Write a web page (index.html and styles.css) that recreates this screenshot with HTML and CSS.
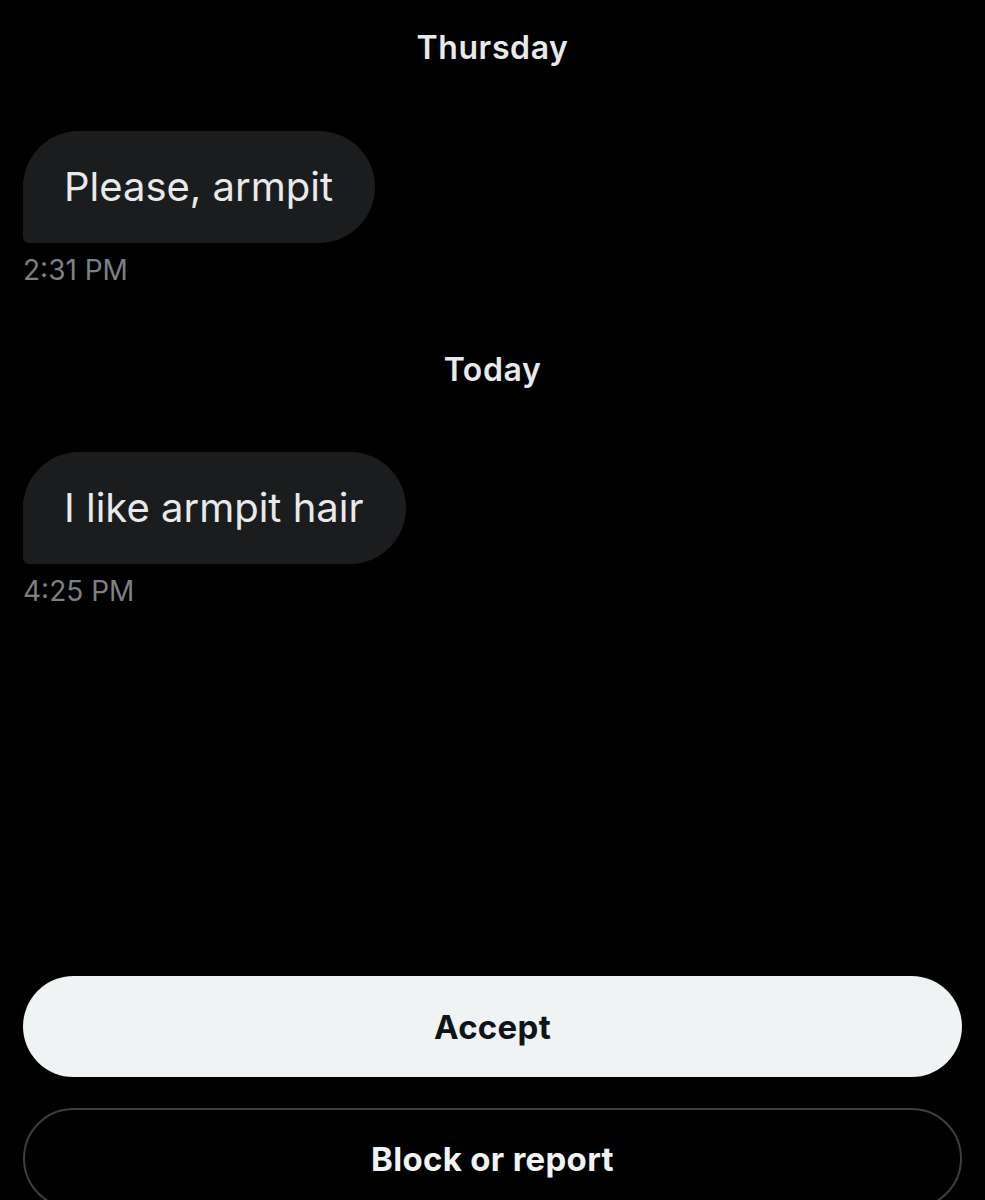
FILE: index.html
```html
<!DOCTYPE html>
<html lang="en">
<head>
  <meta charset="UTF-8">
  <meta name="viewport" content="width=device-width, initial-scale=1.0">
  <title>Message request</title>
  <link rel="stylesheet" href="styles.css">
</head>
<body>
  <main class="thread">
    <div class="day">Thursday</div>
    <div class="message">
      <div class="bubble">Please, armpit</div>
      <div class="time">2:31 PM</div>
    </div>

    <div class="day">Today</div>
    <div class="message">
      <div class="bubble">I like armpit hair</div>
      <div class="time">4:25 PM</div>
    </div>
  </main>

  <div class="actions">
    <button class="btn accept">Accept</button>
    <button class="btn block">Block or report</button>
  </div>
</body>
</html>
```

FILE: styles.css
```css
body {
  background-color: #000;
  color: #e7e9ea;
  font-family: Inter, "Noto Sans", Arial, sans-serif;
  margin: 0;
  padding: 0 23px;
  overflow: hidden;
  height: 1200px;
}
.thread {
  display: flex;
  flex-direction: column;
}
.day {
  text-align: center;
  font-size: 32px;
  font-weight: 600;
  letter-spacing: 0.6px;
  line-height: 36px;
  margin-top: 30px;
  margin-bottom: 65px;
  color: #e7e9ea;
}
.message + .day {
  margin-top: 66px;
  margin-bottom: 64px;
}
.message {
  display: flex;
  flex-direction: column;
  align-items: flex-start;
}
.bubble {
  background-color: #1b1c1e;
  color: #e7e9ea;
  font-size: 40px;
  line-height: 46px;
  padding: 33px 42px 33px 41px;
  border-radius: 56px 56px 56px 6px;
}
.time {
  margin-top: 11px;
  font-size: 28px;
  line-height: 32px;
  color: #7c8085;
}
.actions {
  display: flex;
  flex-direction: column;
  gap: 31px;
  margin-top: 369px;
}
.btn {
  font-family: inherit;
  font-size: 33px;
  font-weight: 700;
  letter-spacing: 0.3px;
  height: 101px;
  border-radius: 51px;
  cursor: pointer;
}
.accept {
  background-color: #eff3f4;
  color: #0f1419;
  border: none;
}
.block {
  background-color: #000;
  color: #eff3f4;
  border: 2px solid #3b3f43;
}
```
